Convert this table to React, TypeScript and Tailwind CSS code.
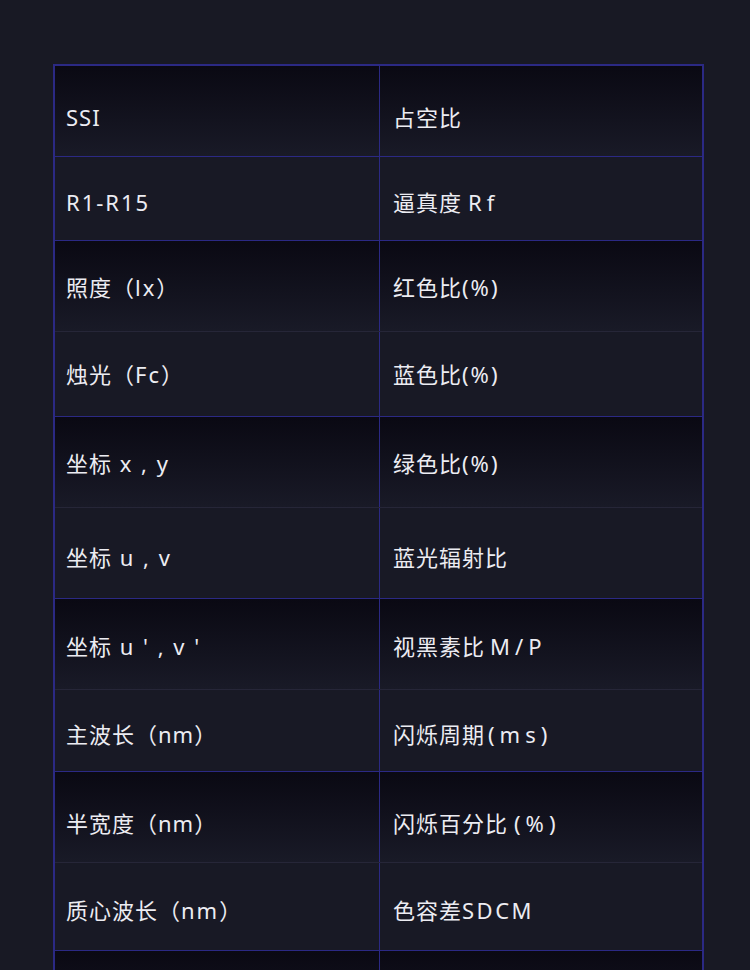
type Cell = { text: string; latin: string };
type RowData = { left: Cell; right: Cell; h: string; pt: string; grad: boolean; line: string };

const blue = 'border-[#2b2984]';
const dim = 'border-[#262638]';

const rows: RowData[] = [
  { left: { text: 'SSI', latin: 'tracking-[1px]' }, right: { text: '占空比', latin: '' }, h: 'h-[91px]', pt: 'pt-[12px]', grad: true, line: blue },
  { left: { text: 'R1-R15', latin: 'tracking-[2px]' }, right: { text: '逼真度Rf', latin: 'tracking-[5px] ml-[6px]' }, h: 'h-[84px]', pt: 'pt-[8px]', grad: false, line: blue },
  { left: { text: '照度（lx）', latin: 'tracking-[2px]' }, right: { text: '红色比(%)', latin: 'tracking-[2px]' }, h: 'h-[91px]', pt: 'pt-[3px]', grad: true, line: dim },
  { left: { text: '烛光（Fc）', latin: 'tracking-[2px]' }, right: { text: '蓝色比(%)', latin: 'tracking-[2px]' }, h: 'h-[85px]', pt: 'pt-[1px]', grad: false, line: blue },
  { left: { text: '坐标 x , y', latin: 'tracking-[2px]' }, right: { text: '绿色比(%)', latin: 'tracking-[2px]' }, h: 'h-[91px]', pt: 'pt-[3px]', grad: true, line: dim },
  { left: { text: '坐标 u , v', latin: 'tracking-[2px]' }, right: { text: '蓝光辐射比', latin: '' }, h: 'h-[91px]', pt: 'pt-[9px]', grad: false, line: blue },
  { left: { text: "坐标 u ' , v '", latin: 'tracking-[2px]' }, right: { text: '视黑素比M/P', latin: 'tracking-[5px] ml-[5px]' }, h: 'h-[91px]', pt: 'pt-[5px]', grad: true, line: dim },
  { left: { text: '主波长（nm）', latin: 'tracking-[1px]' }, right: { text: '闪烁周期(ms)', latin: 'tracking-[5px] ml-[3px]' }, h: 'h-[82px]', pt: 'pt-[8px]', grad: false, line: blue },
  { left: { text: '半宽度（nm）', latin: 'tracking-[1px]' }, right: { text: '闪烁百分比(%)', latin: 'tracking-[5px] ml-[6px]' }, h: 'h-[91px]', pt: 'pt-[13px]', grad: true, line: dim },
  { left: { text: '质心波长（nm）', latin: 'tracking-[2px]' }, right: { text: '色容差SDCM', latin: 'tracking-[2.5px]' }, h: 'h-[88px]', pt: 'pt-[8px]', grad: false, line: blue },
  { left: { text: '', latin: '' }, right: { text: '', latin: '' }, h: 'h-[91px]', pt: 'pt-[8px]', grad: true, line: dim },
];

function Text({ cell }: { cell: Cell }) {
  const parts = cell.text.split(/([\u0000-\u00ff]+)/).filter(Boolean);
  return (
    <span className="whitespace-pre">
      {parts.map((p, i) =>
        /^[\u0000-\u00ff]+$/.test(p) ? (
          <span key={i} className={cell.latin}>
            {p}
          </span>
        ) : (
          <span key={i}>{p}</span>
        ),
      )}
    </span>
  );
}

function Row({ row }: { row: RowData }) {
  const bg = row.grad ? 'bg-gradient-to-b from-[#0a0913] to-[#191a27]' : 'bg-[#181925]';
  return (
    <div className={`grid grid-cols-[325px_1fr] border-b ${row.line} ${row.h} ${bg}`}>
      <div className={`flex items-center border-r ${blue} pl-[11px] ${row.pt}`}>
        <Text cell={row.left} />
      </div>
      <div className={`flex items-center pl-[13px] ${row.pt}`}>
        <Text cell={row.right} />
      </div>
    </div>
  );
}

export default function App() {
  return (
    <div
      className="min-h-[970px] bg-[#181924] pl-[53px] pt-[64px] text-[22px] tracking-[1px] text-[#ececf2]"
      style={{ fontFamily: '"Noto Sans", "Noto Sans CJK SC", sans-serif' }}
    >
      <div className={`w-[651px] border-2 ${blue}`}>
        {rows.map((r, i) => (
          <Row key={i} row={r} />
        ))}
      </div>
    </div>
  );
}
